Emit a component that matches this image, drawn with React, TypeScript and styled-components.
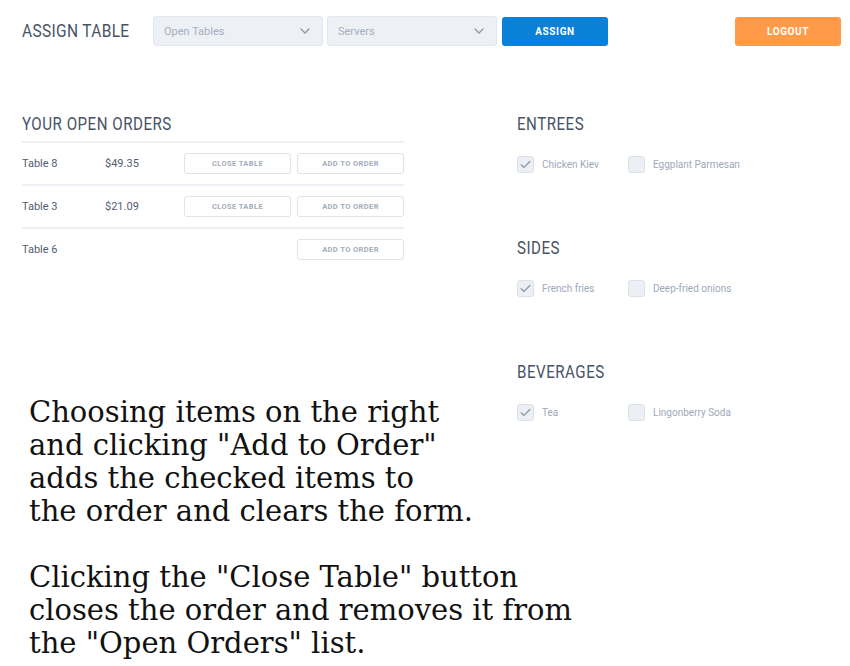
import React from "react";
import styled, { createGlobalStyle } from "styled-components";

const Global = createGlobalStyle`
  html, body { margin: 0; padding: 0; background: #ffffff; }
  body { font-family: Roboto, "Liberation Sans", sans-serif; }
  * { box-sizing: border-box; }
`;

const Page = styled.div`
  width: 850px;
  height: 666px;
  overflow: hidden;
  background: #fff;
`;

const Header = styled.header`
  display: flex;
  align-items: center;
  height: 62px;
  padding: 0 9px 0 22px;
`;

const Title = styled.h1`
  margin: 0;
  width: 131px;
  flex: none;
  font-size: 18px;
  line-height: 22px;
  font-weight: 400;
  color: #485366;
  letter-spacing: 0.4px;
  white-space: nowrap;
  transform: scaleX(0.86);
  transform-origin: left center;
`;

const Select = styled.div`
  display: flex;
  align-items: center;
  justify-content: space-between;
  width: 170px;
  height: 30px;
  margin-right: 4px;
  padding: 0 12px 0 10px;
  background: #edf0f5;
  border: 1px solid #e2e6ee;
  border-radius: 3px;
  font-size: 11px;
  color: #a6afbf;
`;

const Button = styled.button<{ $bg: string; $offset?: number }>`
  width: 106px;
  height: 29px;
  margin-left: ${(p) => p.$offset ?? 0}px;
  border: none;
  border-radius: 3px;
  background: ${(p) => p.$bg};
  color: #fff;
  font-family: Roboto, "Liberation Sans", sans-serif;
  font-size: 10px;
  font-weight: 700;
  letter-spacing: 0.6px;
  padding: 0;
`;

const Spacer = styled.div`
  flex: 1;
`;

const Main = styled.main`
  display: grid;
  grid-template-columns: 382px 1fr;
  column-gap: 113px;
  padding: 51px 0 0 22px;
`;

const Column = styled.section`
  display: flex;
  flex-direction: column;
`;

const Heading = styled.h2`
  margin: 0;
  font-size: 18px;
  line-height: 22px;
  height: 20px;
  font-weight: 400;
  color: #485366;
  letter-spacing: 0.6px;
  white-space: nowrap;
  transform: scaleX(0.84);
  transform-origin: left center;
`;

const OrderList = styled.div`
  margin-top: 8px;
  display: flex;
  flex-direction: column;
`;

const OrderRow = styled.div`
  display: grid;
  grid-template-columns: 77px 73px 107px 107px;
  column-gap: 6px;
  align-items: center;
  height: 43px;
  border-top: 2px solid #edf0f5;
  font-size: 11px;
  color: #525d72;
`;

const Cell = styled.span<{ $col: number }>`
  grid-column: ${(p) => p.$col};
`;

const OutlineButton = styled.button<{ $col: number }>`
  grid-column: ${(p) => p.$col};
  height: 21px;
  background: #fff;
  border: 1px solid #dfe3ea;
  border-radius: 3px;
  font-family: Roboto, "Liberation Sans", sans-serif;
  font-size: 7.5px;
  font-weight: 700;
  letter-spacing: 0.4px;
  color: #a4acbb;
  padding: 0;
`;

const Note = styled.div`
  margin: 126px 0 0 7px;
  font-family: "DejaVu Serif", "Liberation Serif", serif;
  font-size: 29px;
  line-height: 33px;
  color: #111;
  white-space: nowrap;
`;

const NoteParagraph = styled.p`
  margin: 0 0 33px 0;
`;

const NoteLine = styled.span`
  display: block;
`;

const MenuSection = styled.div`
  display: flex;
  flex-direction: column;
  margin-bottom: 64px;
`;

const Options = styled.div`
  display: grid;
  grid-template-columns: 111px auto;
  margin-top: 22px;
  height: 18px;
`;

const Option = styled.label`
  display: flex;
  align-items: center;
  gap: 8px;
  font-size: 10px;
  color: #9fa8b8;
`;

const Box = styled.span`
  display: flex;
  align-items: center;
  justify-content: center;
  width: 17px;
  height: 17px;
  border-radius: 3px;
  background: #eceff4;
  border: 1px solid #dce1e9;
`;

const Chevron = () => (
  <svg width="10" height="6" viewBox="0 0 10 6" fill="none">
    <path d="M1 1l4 4 4-4" stroke="#8d96a6" strokeWidth="1.3" strokeLinecap="round" strokeLinejoin="round" />
  </svg>
);

const Check = () => (
  <svg width="11" height="9" viewBox="0 0 11 9" fill="none">
    <path d="M1.2 4.8l2.8 2.6L9.8 1.5" stroke="#8b94a6" strokeWidth="1.3" strokeLinecap="round" strokeLinejoin="round" />
  </svg>
);

const orders = [
  { table: "Table 8", total: "$49.35" },
  { table: "Table 3", total: "$21.09" },
  { table: "Table 6", total: "" },
];

const menu = [
  { title: "ENTREES", items: [["Chicken Kiev", true], ["Eggplant Parmesan", false]] },
  { title: "SIDES", items: [["French fries", true], ["Deep-fried onions", false]] },
  { title: "BEVERAGES", items: [["Tea", true], ["Lingonberry Soda", false]] },
] as const;

export default function App() {
  return (
    <Page>
      <Global />
      <Header>
        <Title>ASSIGN TABLE</Title>
        <Select>
          <span>Open Tables</span>
          <Chevron />
        </Select>
        <Select>
          <span>Servers</span>
          <Chevron />
        </Select>
        <Button $bg="#0b80d8" $offset={1}>ASSIGN</Button>
        <Spacer />
        <Button $bg="#ff9a48">LOGOUT</Button>
      </Header>
      <Main>
        <Column>
          <Heading>YOUR OPEN ORDERS</Heading>
          <OrderList>
            {orders.map((o) => (
              <OrderRow key={o.table}>
                <Cell $col={1}>{o.table}</Cell>
                <Cell $col={2}>{o.total}</Cell>
                {o.total && <OutlineButton $col={3}>CLOSE TABLE</OutlineButton>}
                <OutlineButton $col={4}>ADD TO ORDER</OutlineButton>
              </OrderRow>
            ))}
          </OrderList>
          <Note>
            <NoteParagraph>
              <NoteLine>Choosing items on the right</NoteLine>
              <NoteLine>and clicking "Add to Order"</NoteLine>
              <NoteLine>adds the checked items to</NoteLine>
              <NoteLine>the order and clears the form.</NoteLine>
            </NoteParagraph>
            <NoteParagraph>
              <NoteLine>Clicking the "Close Table" button</NoteLine>
              <NoteLine>closes the order and removes it from</NoteLine>
              <NoteLine>the "Open Orders" list.</NoteLine>
            </NoteParagraph>
          </Note>
        </Column>
        <Column>
          {menu.map((s) => (
            <MenuSection key={s.title}>
              <Heading>{s.title}</Heading>
              <Options>
                {s.items.map(([label, checked]) => (
                  <Option key={label}>
                    <Box>{checked && <Check />}</Box>
                    {label}
                  </Option>
                ))}
              </Options>
            </MenuSection>
          ))}
        </Column>
      </Main>
    </Page>
  );
}
